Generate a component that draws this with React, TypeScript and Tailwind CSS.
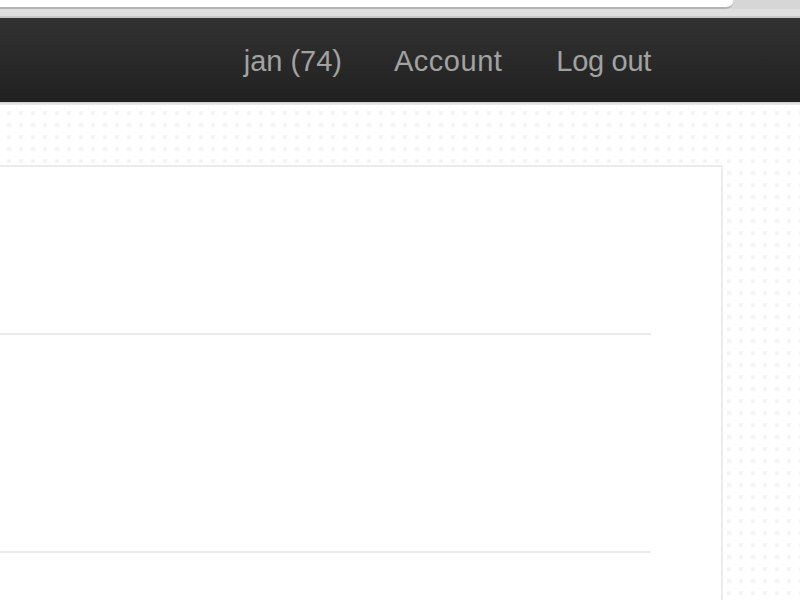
import React from "react";

export default function App() {
  return (
    <div className="h-[600px] w-[800px] overflow-hidden bg-white flex flex-col" style={{ fontFamily: '"Liberation Sans", Arial, sans-serif' }}>
      {/* browser chrome strip */}
      <div className="h-[18px] shrink-0 bg-[#d6d6d6] flex flex-col">
        <div className="w-[733px] h-[9px] shrink-0 bg-white border-b-2 border-[#b3b3b3] rounded-br-[7px]" />
        <div className="flex-1 bg-[#dfdfdf] border-b-2 border-[#c6c6c6]" />
      </div>
      {/* navbar */}
      <div className="h-[84px] shrink-0 bg-gradient-to-b from-[#323232] to-[#212121] flex items-center justify-end pr-[149px] pt-[4px] text-[29px] text-[#a2a2a2]">
        <span>jan (74)</span>
        <span className="ml-[52px] tracking-[0.5px]">Account</span>
        <span className="ml-[54px] tracking-[-0.3px]">Log out</span>
      </div>
      <div className="h-[3px] shrink-0 bg-gradient-to-b from-[#cfcfcf] to-[#ececec]" />
      {/* dotted page */}
      <div className="flex-1 bg-[#f4f4f4] bg-[image:linear-gradient(to_right,transparent_4px,white_4px),linear-gradient(to_bottom,transparent_4px,white_4px)] bg-[size:12px_12px] bg-[position:7px_6px] pt-[60px]">
        <div className="w-[723px] h-[600px] bg-white border-t-2 border-r-2 border-[#ebebeb] pr-[70px]">
          <div className="h-[168px] border-b-2 border-[#ebebeb]" />
          <div className="h-[218px] border-b-2 border-[#ebebeb]" />
        </div>
      </div>
    </div>
  );
}
